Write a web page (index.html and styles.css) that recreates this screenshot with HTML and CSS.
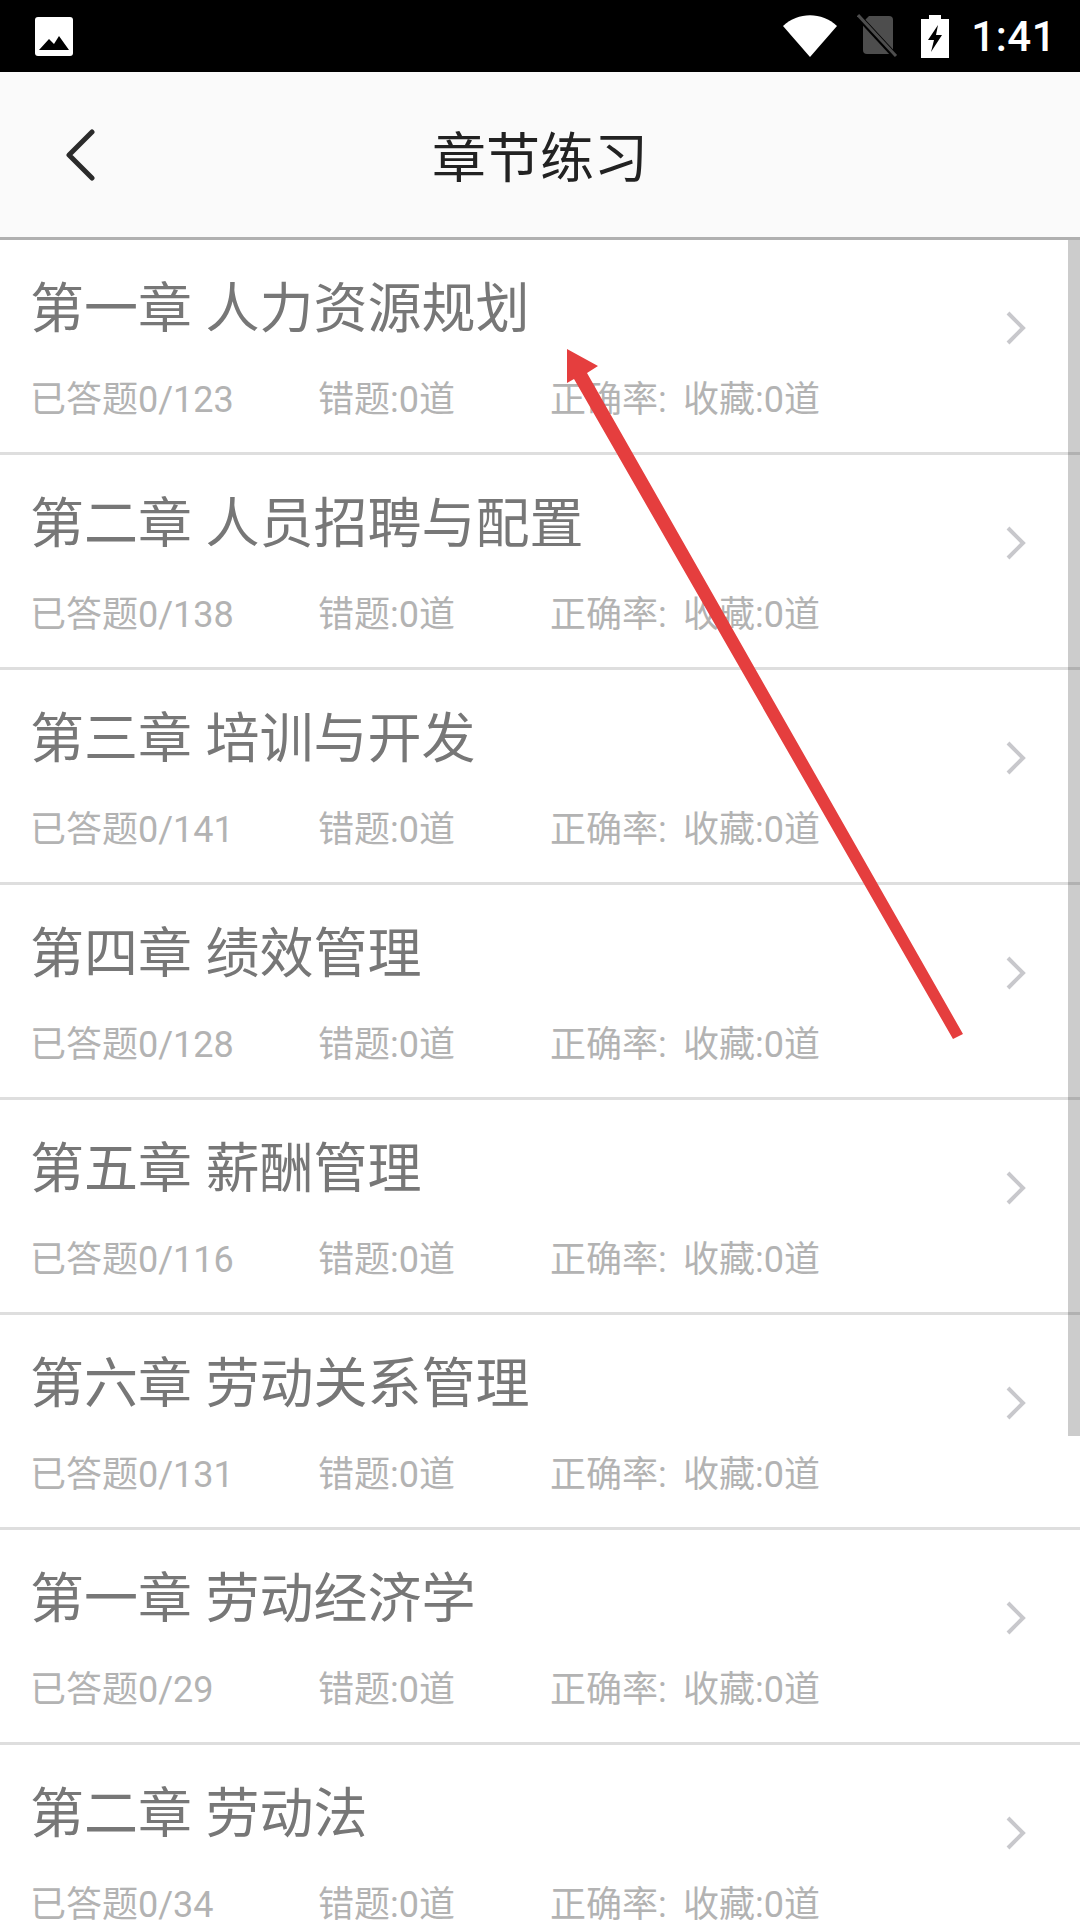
FILE: index.html
```html
<!DOCTYPE html>
<html lang="zh-CN">
<head>
    <meta charset="UTF-8">
    <meta name="viewport" content="width=device-width, initial-scale=1.0">
    <title>章节练习</title>
    <link rel="stylesheet" href="styles.css">
</head>
<body>
    <div class="statusbar">
        <svg class="icon-image" width="38" height="39" viewBox="0 0 38 39">
            <rect width="38" height="39" rx="3" fill="#fff"/>
            <path d="M4 33 L14 22 L19 27 L24 19 L34 33 Z" fill="#000"/>
        </svg>
        <div class="status-right">
            <svg class="icon-wifi" width="54" height="42" viewBox="0 0 54 42">
                <path d="M0 11 C15 -3.5 39 -3.5 54 11 L27 42 Z" fill="#fff"/>
            </svg>
            <svg class="icon-sim" width="42" height="44" viewBox="0 0 42 44">
                <path d="M12 2 H32 Q36 2 36 6 V36 Q36 40 32 40 H10 Q6 40 6 36 V8 Z" fill="#4d4d4d"/>
                <path d="M1 2 L39 43" stroke="#000" stroke-width="6"/>
                <path d="M1 1 L39 42" stroke="#4d4d4d" stroke-width="3"/>
            </svg>
            <svg class="icon-battery" width="28" height="43" viewBox="0 0 28 43">
                <path d="M8 0 H20 V4 H28 V43 H0 V4 H8 Z" fill="#fff"/>
                <path d="M17 10 L7 25 H13 L10 37 L21 20 H15 Z" fill="#000"/>
            </svg>
            <span class="clock">1:41</span>
        </div>
    </div>

    <div class="header">
        <svg class="back" width="32" height="52" viewBox="0 0 32 52">
            <path d="M28 3 L5 26 L28 49" fill="none" stroke="#2b2b2b" stroke-width="5" stroke-linecap="round" stroke-linejoin="round"/>
        </svg>
        <h1>章节练习</h1>
    </div>

    <div class="chapter-list">
        <div class="chapter">
            <div class="chapter-text">
                <div class="chapter-title">第一章 人力资源规划</div>
                <div class="stats"><span class="answered">已答题0/123</span><span class="wrong">错题:0道</span><span class="rate">正确率:</span><span>收藏:0道</span></div>
            </div>
            <svg class="arrow-right" width="22" height="36" viewBox="0 0 22 36"><path d="M3 3 L18 18 L3 33" fill="none" stroke="#c8c8cc" stroke-width="4"/></svg>
        </div>
        <div class="chapter">
            <div class="chapter-text">
                <div class="chapter-title">第二章 人员招聘与配置</div>
                <div class="stats"><span class="answered">已答题0/138</span><span class="wrong">错题:0道</span><span class="rate">正确率:</span><span>收藏:0道</span></div>
            </div>
            <svg class="arrow-right" width="22" height="36" viewBox="0 0 22 36"><path d="M3 3 L18 18 L3 33" fill="none" stroke="#c8c8cc" stroke-width="4"/></svg>
        </div>
        <div class="chapter">
            <div class="chapter-text">
                <div class="chapter-title">第三章 培训与开发</div>
                <div class="stats"><span class="answered">已答题0/141</span><span class="wrong">错题:0道</span><span class="rate">正确率:</span><span>收藏:0道</span></div>
            </div>
            <svg class="arrow-right" width="22" height="36" viewBox="0 0 22 36"><path d="M3 3 L18 18 L3 33" fill="none" stroke="#c8c8cc" stroke-width="4"/></svg>
        </div>
        <div class="chapter">
            <div class="chapter-text">
                <div class="chapter-title">第四章 绩效管理</div>
                <div class="stats"><span class="answered">已答题0/128</span><span class="wrong">错题:0道</span><span class="rate">正确率:</span><span>收藏:0道</span></div>
            </div>
            <svg class="arrow-right" width="22" height="36" viewBox="0 0 22 36"><path d="M3 3 L18 18 L3 33" fill="none" stroke="#c8c8cc" stroke-width="4"/></svg>
        </div>
        <div class="chapter">
            <div class="chapter-text">
                <div class="chapter-title">第五章 薪酬管理</div>
                <div class="stats"><span class="answered">已答题0/116</span><span class="wrong">错题:0道</span><span class="rate">正确率:</span><span>收藏:0道</span></div>
            </div>
            <svg class="arrow-right" width="22" height="36" viewBox="0 0 22 36"><path d="M3 3 L18 18 L3 33" fill="none" stroke="#c8c8cc" stroke-width="4"/></svg>
        </div>
        <div class="chapter">
            <div class="chapter-text">
                <div class="chapter-title">第六章 劳动关系管理</div>
                <div class="stats"><span class="answered">已答题0/131</span><span class="wrong">错题:0道</span><span class="rate">正确率:</span><span>收藏:0道</span></div>
            </div>
            <svg class="arrow-right" width="22" height="36" viewBox="0 0 22 36"><path d="M3 3 L18 18 L3 33" fill="none" stroke="#c8c8cc" stroke-width="4"/></svg>
        </div>
        <div class="chapter">
            <div class="chapter-text">
                <div class="chapter-title">第一章 劳动经济学</div>
                <div class="stats"><span class="answered">已答题0/29</span><span class="wrong">错题:0道</span><span class="rate">正确率:</span><span>收藏:0道</span></div>
            </div>
            <svg class="arrow-right" width="22" height="36" viewBox="0 0 22 36"><path d="M3 3 L18 18 L3 33" fill="none" stroke="#c8c8cc" stroke-width="4"/></svg>
        </div>
        <div class="chapter">
            <div class="chapter-text">
                <div class="chapter-title">第二章 劳动法</div>
                <div class="stats"><span class="answered">已答题0/34</span><span class="wrong">错题:0道</span><span class="rate">正确率:</span><span>收藏:0道</span></div>
            </div>
            <svg class="arrow-right" width="22" height="36" viewBox="0 0 22 36"><path d="M3 3 L18 18 L3 33" fill="none" stroke="#c8c8cc" stroke-width="4"/></svg>
        </div>
        <div class="scrollbar"></div>
    </div>

    <!-- red annotation drawn over the list -->
    <svg class="annotation" width="1080" height="1920" viewBox="0 0 1080 1920">
        <path d="M567 349 L598 366 L587 373 L963 1034 L953 1039 L574 379 L567 383 Z" fill="#e53e3e"/>
    </svg>
</body>
</html>
```

FILE: styles.css
```css
html, body {
    margin: 0;
    height: 1920px;
    overflow: hidden;
}
body {
    position: relative;
    background-color: #fff;
    font-family: Roboto, "Noto Sans CJK SC", sans-serif;
}
.statusbar {
    height: 72px;
    background-color: #000;
    display: flex;
    justify-content: space-between;
    align-items: center;
    padding: 0 24px 0 35px;
}
.status-right {
    display: flex;
    align-items: center;
}
.icon-wifi {
    margin-right: 20px;
}
.icon-sim {
    margin-right: 22px;
}
.icon-battery {
    margin-right: 22px;
}
.clock {
    color: #fff;
    font-size: 42px;
    font-weight: 500;
    letter-spacing: 0.5px;
}
.header {
    height: 165px;
    background-color: #fafafa;
    border-bottom: 3px solid #b0b0b0;
    display: flex;
    align-items: center;
    justify-content: center;
    position: relative;
}
.back {
    position: absolute;
    left: 64px;
    top: 57px;
}
h1 {
    margin: 0;
    font-size: 54px;
    font-weight: 400;
    color: #222;
}
.chapter-list {
    position: relative;
}
.chapter {
    box-sizing: border-box;
    height: 215px;
    padding: 0 53px 0 30px;
    border-bottom: 3px solid #dedede;
    display: flex;
    justify-content: space-between;
    align-items: flex-start;
}
.chapter-title {
    margin-top: 32px;
    font-size: 54px;
    line-height: 76px;
    color: #777;
}
.stats {
    margin-top: 27px;
    font-size: 36px;
    line-height: 50px;
    color: #b3b3b3;
    display: flex;
}
.answered {
    width: 288px;
}
.wrong {
    width: 232px;
}
.rate {
    width: 133px;
}
.arrow-right {
    margin-top: 70px;
}
.scrollbar {
    position: absolute;
    top: 0;
    right: 0;
    width: 12px;
    height: 1196px;
    background-color: rgba(0, 0, 0, 0.2);
}
.annotation {
    position: absolute;
    top: 0;
    left: 0;
}
```
